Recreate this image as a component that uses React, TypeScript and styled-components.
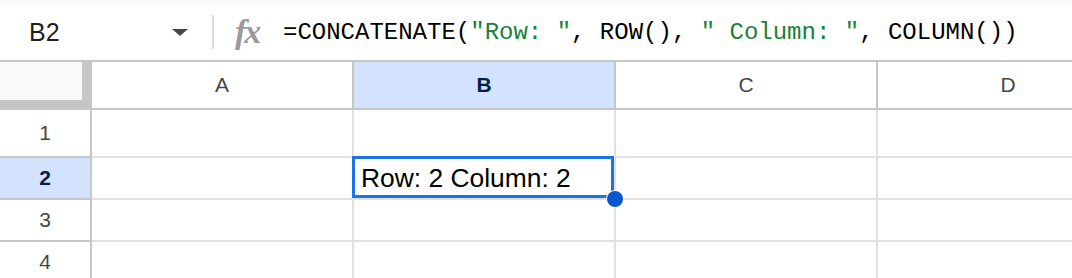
import styled, { createGlobalStyle } from 'styled-components';

const GlobalStyle = createGlobalStyle`
  html, body {
    margin: 0;
    padding: 0;
    background: #ffffff;
  }
  body {
    font-family: 'Liberation Sans', Arial, sans-serif;
  }
`;

const COLUMNS = ['A', 'B', 'C', 'D'];
const ROWS = [1, 2, 3, 4];
const ACTIVE_COL = 'B';
const ACTIVE_ROW = 2;

const cellValue = (col: string, row: number) =>
  col === ACTIVE_COL && row === ACTIVE_ROW ? `Row: ${row} Column: ${COLUMNS.indexOf(col) + 1}` : '';

const App = () => {
  return (
    <Page>
      <GlobalStyle />
      <TopStrip />
      <FormulaBar>
        <NameBox>
          <NameText>B2</NameText>
          <DropArrow />
        </NameBox>
        <Divider />
        <FxIcon>fx</FxIcon>
        <Formula>
          =CONCATENATE(<Str>"Row: "</Str>, ROW(), <Str>" Column: "</Str>, COLUMN())
        </Formula>
      </FormulaBar>

      <Sheet>
        <Corner />
        {COLUMNS.map((col) => (
          <ColumnHeader key={col} $active={col === ACTIVE_COL}>
            {col}
          </ColumnHeader>
        ))}

        {ROWS.map((row) => (
          <Row key={row}>
            <RowHeader $active={row === ACTIVE_ROW}>{row}</RowHeader>
            {COLUMNS.map((col) => {
              const selected = col === ACTIVE_COL && row === ACTIVE_ROW;
              return (
                <Cell key={col}>
                  {cellValue(col, row)}
                  {selected && (
                    <Selection>
                      <FillHandle />
                    </Selection>
                  )}
                </Cell>
              );
            })}
          </Row>
        ))}
      </Sheet>
    </Page>
  );
};

const Page = styled.div`
  width: 1072px;
  height: 278px;
  overflow: hidden;
  background: #ffffff;
`;

const TopStrip = styled.div`
  height: 4px;
  background: #f8f9fa;
`;

const FormulaBar = styled.div`
  display: flex;
  align-items: center;
  height: 56px;
  border-bottom: 2px solid #c4c7c5;
  background: #ffffff;
`;

const NameBox = styled.div`
  display: flex;
  align-items: center;
  justify-content: space-between;
  box-sizing: border-box;
  width: 200px;
  padding: 0 12px 0 29px;
`;

const NameText = styled.span`
  font-family: 'Liberation Sans', Arial, sans-serif;
  font-size: 25px;
  color: #1f1f1f;
`;

const DropArrow = styled.span`
  width: 0;
  height: 0;
  border-left: 8px solid transparent;
  border-right: 8px solid transparent;
  border-top: 7px solid #444746;
`;

const Divider = styled.span`
  width: 2px;
  height: 34px;
  margin-left: 12px;
  background: #dadce0;
`;

const FxIcon = styled.span`
  margin-left: 21px;
  width: 30px;
  font-family: 'Liberation Serif', 'Times New Roman', serif;
  font-style: italic;
  font-weight: 700;
  font-size: 34px;
  line-height: 1;
  color: #9a9a9a;
  letter-spacing: -2px;
`;

const Formula = styled.div`
  margin-left: 18px;
  font-family: 'Liberation Mono', 'DejaVu Sans Mono', monospace;
  font-size: 24px;
  color: #000000;
  white-space: pre;
`;

const Str = styled.span`
  color: #188038;
`;

const Sheet = styled.div`
  display: grid;
  grid-template-columns: 92px repeat(4, 262px);
  grid-template-rows: 48px 48px 42px 42px 42px;
`;

const Row = styled.div`
  display: contents;
`;

const Corner = styled.div`
  box-sizing: border-box;
  background: #f8f9fa;
  border-right: 10px solid #c4c7c5;
  border-bottom: 10px solid #c4c7c5;
`;

const ColumnHeader = styled.div<{ $active?: boolean }>`
  box-sizing: border-box;
  display: flex;
  align-items: center;
  justify-content: center;
  border-right: 2px solid #c4c7c5;
  border-bottom: 2px solid #c4c7c5;
  background: ${({ $active }) => ($active ? '#d3e3fd' : '#ffffff')};
  color: ${({ $active }) => ($active ? '#041e49' : '#444746')};
  font-weight: ${({ $active }) => ($active ? 700 : 400)};
  font-size: 21px;
`;

const RowHeader = styled(ColumnHeader)``;

const Cell = styled.div`
  position: relative;
  box-sizing: border-box;
  display: flex;
  align-items: center;
  padding-left: 7px;
  border-right: 2px solid #e1e1e1;
  border-bottom: 2px solid #e1e1e1;
  font-size: 26.4px;
  color: #000000;
  white-space: nowrap;
`;

const Selection = styled.div`
  position: absolute;
  z-index: 2;
  top: -2px;
  left: -2px;
  right: 0;
  bottom: 0;
  border: 3px solid #1a73e8;
  pointer-events: none;
`;

const FillHandle = styled.span`
  position: absolute;
  right: -12px;
  bottom: -12px;
  width: 16px;
  height: 16px;
  border-radius: 50%;
  background: #0b57d0;
  box-shadow: 0 0 0 1px #ffffff;
`;

export default App;
